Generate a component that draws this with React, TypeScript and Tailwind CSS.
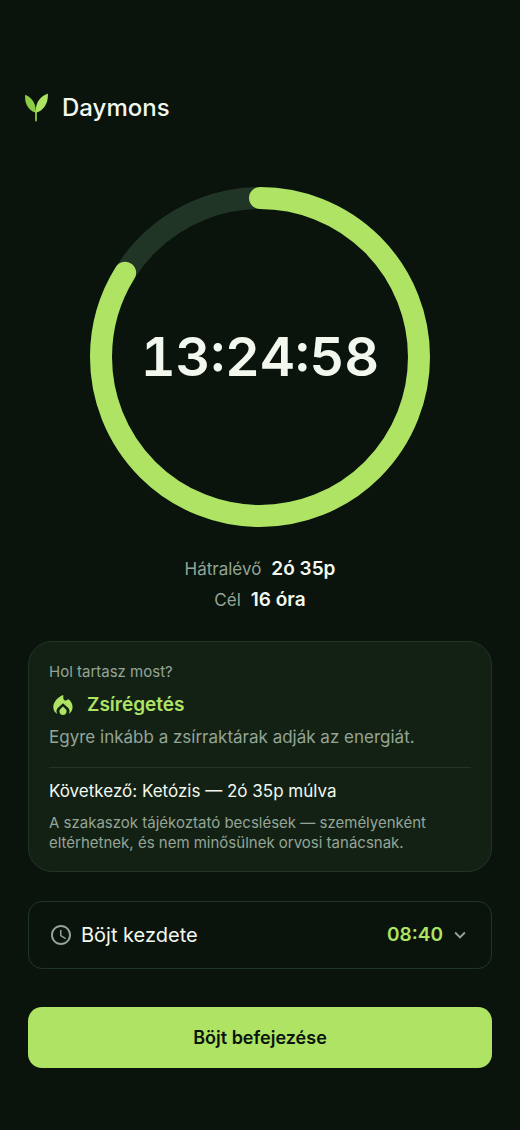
import { MdAccessTime, MdOutlineKeyboardArrowDown } from "react-icons/md"

const elapsedSeconds = 13 * 3600 + 24 * 60 + 58
const goalSeconds = 16 * 3600

const stats = [
  { label: "Hátralévő", value: "2ó 35p" },
  { label: "Cél", value: "16 óra" },
]

function SproutLogo() {
  return (
    <svg viewBox="0 0 24 30" className="h-[30px] w-6" aria-hidden="true">
      <path d="M12 18v9.500" stroke="#8ccb45" strokeWidth="1.800" strokeLinecap="round" />
      <path d="M1.200 1.800C.4 9.500 3.400 16.800 11.500 19.800 12.800 12.500 8.600 4.500 1.200 1.800Z" fill="#8ccb45" />
      <path d="M23.800.4C16.300 3.400 11 9.500 11.900 19.800 20 17.500 24.600 9.500 23.800.4Z" fill="#aee364" />
    </svg>
  )
}

function FlameIcon() {
  return (
    <svg viewBox="0 0 20 20" className="ml-1 size-5" fill="currentColor" aria-hidden="true">
      <path d="M10.300 0v2.900c0 1.500 1.100 2.600 2.400 2.600.8 0 1.500-.4 2-1l.4-.6c2.800 1.800 4.500 4.800 4.500 8 0 3-1.600 5.700-4 7.200.6-.8.900-1.800.9-2.800 0-1.300-.5-2.500-1.500-3.500L10 8.200l-5 4.600c-1 1-1.500 2.200-1.500 3.500 0 1 .3 2 .9 2.800C1.900 17.600.3 14.900.3 11.900.3 6.700 5 2 10.300 0Z" />
      <path d="m10 11.500 2.600 2.400c.6.600 1 1.400 1 2.300 0 2.100-1.600 3.800-3.600 3.800s-3.600-1.700-3.600-3.800c0-.9.4-1.700 1-2.300l2.600-2.400Z" />
    </svg>
  )
}

function FastingRing({ progress, time }: { progress: number; time: string }) {
  const radius = 159
  const length = 2 * Math.PI * radius

  return (
    <div className="grid w-full max-w-[340px] place-items-center">
      <svg viewBox="0 0 340 340" className="col-start-1 row-start-1 w-full -rotate-90" aria-hidden="true">
        <circle cx="170" cy="170" r={radius} fill="none" stroke="#213526" strokeWidth="22" />
        <circle
          cx="170"
          cy="170"
          r={radius}
          fill="none"
          stroke="#aee364"
          strokeWidth="22"
          strokeLinecap="round"
          strokeDasharray={`${length * progress} ${length}`}
        />
      </svg>
      <time className="col-start-1 row-start-1 text-[54px] leading-none font-semibold tabular-nums">{time}</time>
    </div>
  )
}

function StageCard() {
  return (
    <section className="rounded-3xl border border-[#213526] bg-[#132115] px-5 pt-5 pb-[18px] text-[#93a596]">
      <p className="text-[15px] leading-5">Hol tartasz most?</p>
      <div className="mt-2 flex items-center gap-3.5 text-[#aee364]">
        <FlameIcon />
        <h2 className="text-[19px] leading-[30px] font-semibold">Zsírégetés</h2>
      </div>
      <p className="mt-[5px] text-[17px] leading-6">Egyre inkább a zsírraktárak adják az energiát.</p>
      <hr className="mt-[18px] mb-[11px] border-[#213526]" />
      <p className="text-[17px] leading-6 text-[#f3f8ef]">Következő: Ketózis — 2ó 35p múlva</p>
      <p className="mt-2.5 text-[15px] leading-5">
        A szakaszok tájékoztató becslések — személyenként eltérhetnek, és nem minősülnek orvosi tanácsnak.
      </p>
    </section>
  )
}

export default function App() {
  return (
    <div className="min-h-screen bg-[#0a140c] font-['Inter',sans-serif] text-[#f3f8ef]">
      <header className="flex items-center gap-3.5 px-6 pt-[92px]">
        <SproutLogo />
        <h1 className="text-2xl font-medium">Daymons</h1>
      </header>

      <main className="px-7 pt-[63px] pb-[62px]">
        <div className="flex flex-col items-center">
          <FastingRing progress={elapsedSeconds / goalSeconds} time="13:24:58" />
          <dl className="mt-7 flex flex-col items-center gap-[3px]">
            {stats.map((stat) => (
              <div key={stat.label} className="flex items-baseline gap-2.5">
                <dt className="text-[17px] leading-7 text-[#93a596]">{stat.label}</dt>
                <dd className="text-[19px] leading-7 font-semibold">{stat.value}</dd>
              </div>
            ))}
          </dl>
        </div>

        <div className="mt-[27px] flex flex-col gap-[29px]">
          <StageCard />
          <button
            type="button"
            className="flex items-center rounded-[14px] border border-[#213526] px-5 py-[19px] text-xl leading-7"
          >
            <MdAccessTime className="size-6 text-[#93a596]" aria-hidden="true" />
            <span className="ml-2">Böjt kezdete</span>
            <span className="ml-auto text-[19px] font-semibold text-[#aee364]">08:40</span>
            <MdOutlineKeyboardArrowDown className="ml-1.5 size-[22px] text-[#93a596]" aria-hidden="true" />
          </button>
        </div>

        <button
          type="button"
          className="mt-[38px] w-full rounded-[14px] bg-[#aee364] py-[18px] text-lg leading-[25px] font-semibold text-[#0a140c]"
        >
          Böjt befejezése
        </button>
      </main>
    </div>
  )
}
